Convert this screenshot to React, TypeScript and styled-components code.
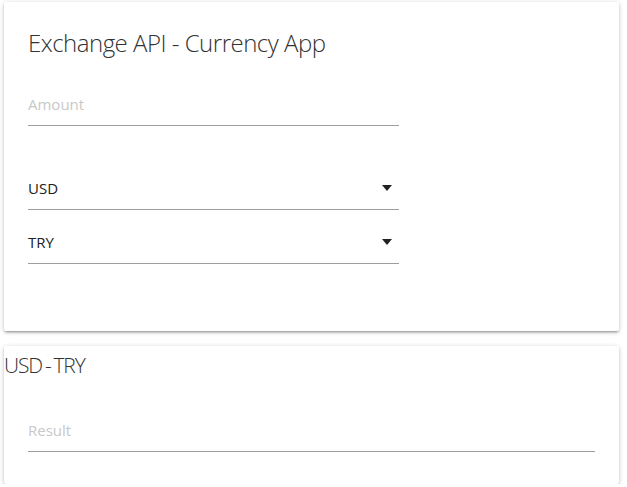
import React, { useState } from "react";
import styled, { createGlobalStyle } from "styled-components";

const GlobalStyle = createGlobalStyle`
  html, body {
    margin: 0;
    padding: 0;
    background: #ffffff;
    font-family: "Open Sans", "Liberation Sans", sans-serif;
    color: #212121;
  }
`;

const Page = styled.div`
  padding: 2px 8px 0 4px;
  display: flex;
  flex-direction: column;
  gap: 15px;
`;

const Card = styled.div<{ $pad?: boolean; $height: number }>`
  background: #fff;
  border-radius: 2px;
  height: ${(p) => p.$height}px;
  box-sizing: border-box;
  padding: ${(p) => (p.$pad ? "24px" : "0")};
  box-shadow: 0 2px 2px 0 rgba(0, 0, 0, 0.14), 0 3px 1px -2px rgba(0, 0, 0, 0.12),
    0 1px 5px 0 rgba(0, 0, 0, 0.2);
`;

const Title = styled.h4`
  margin: 1px 0 0;
  font-weight: 300;
  font-size: 24px;
  letter-spacing: -0.5px;
  line-height: 32px;
  color: #333;
`;

const SubTitle = styled.h5`
  margin: 0;
  padding-top: 4px;
  font-weight: 300;
  font-size: 21px;
  letter-spacing: -1.1px;
  word-spacing: -1.5px;
  line-height: 30px;
  color: #333;
`;

const Field = styled.div<{ $width: number; $top: number }>`
  width: ${(p) => p.$width}px;
  margin-top: ${(p) => p.$top}px;
  border-bottom: 1px solid #9e9e9e;
  height: 34px;
  padding-bottom: 10px;
  display: flex;
  align-items: center;
  justify-content: space-between;
  box-sizing: border-box;
`;

const TextInput = styled.input`
  border: none;
  outline: none;
  background: transparent;
  font-family: inherit;
  font-size: 15px;
  width: 100%;
  padding: 0;
  color: #212121;
  &::placeholder {
    color: #c8c8c8;
  }
`;

const SelectText = styled.span`
  font-size: 15px;
  color: #212121;
`;

const Caret = styled.svg`
  margin-right: 7px;
`;

const ResultBody = styled.div`
  padding: 0 24px;
`;

function Select({ value, top }: { value: string; top: number }) {
  return (
    <Field $width={371} $top={top}>
      <SelectText>{value}</SelectText>
      <Caret width="10" height="6" viewBox="0 0 10 6">
        <path d="M0 0h10L5 6z" fill="#212121" />
      </Caret>
    </Field>
  );
}

export default function App() {
  const [amount, setAmount] = useState("");
  return (
    <>
      <GlobalStyle />
      <Page>
        <Card $pad $height={329}>
          <Title>Exchange API - Currency App</Title>
          <Field $width={371} $top={33}>
            <TextInput placeholder="Amount" value={amount} onChange={(e) => setAmount(e.target.value)} />
          </Field>
          <Select value="USD" top={50} />
          <Select value="TRY" top={20} />
        </Card>
        <Card $height={138}>
          <SubTitle>USD - TRY</SubTitle>
          <ResultBody>
            <Field $width={567} $top={38}>
              <TextInput placeholder="Result" readOnly />
            </Field>
          </ResultBody>
        </Card>
      </Page>
    </>
  );
}
